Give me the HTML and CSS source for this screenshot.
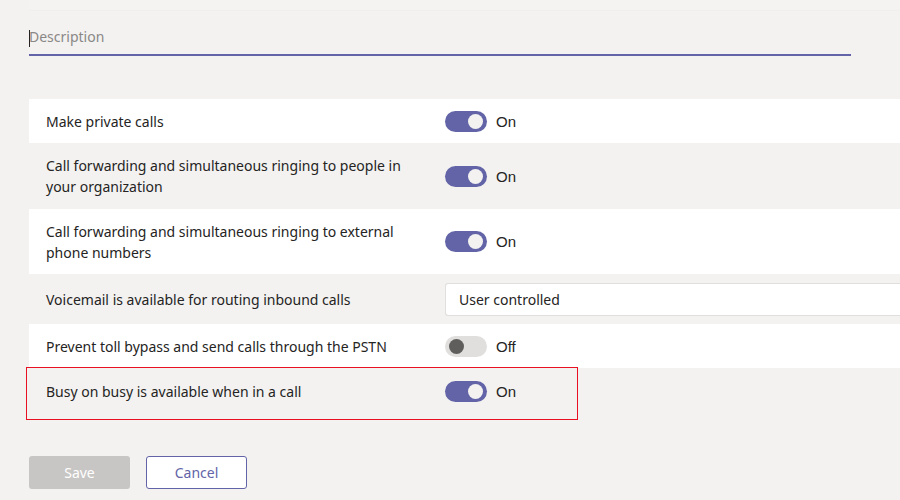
FILE: index.html
```html
<!DOCTYPE html>
<html lang="en">
<head>
    <meta charset="UTF-8">
    <meta name="viewport" content="width=device-width, initial-scale=1.0">
    <title>Calling policy</title>
    <link rel="stylesheet" href="styles.css">
</head>
<body>
    <div class="page">
        <div class="top-strip"></div>

        <div class="field">
            <span class="caret"></span>
            <input class="description" type="text" placeholder="Description">
        </div>

        <div class="settings">
            <div class="row white">
                <div class="label">Make private calls</div>
                <div class="control"><span class="toggle on"></span><span class="state">On</span></div>
            </div>
            <div class="row tall first-tall">
                <div class="label">Call forwarding and simultaneous ringing to people in your organization</div>
                <div class="control"><span class="toggle on"></span><span class="state">On</span></div>
            </div>
            <div class="row white tall">
                <div class="label">Call forwarding and simultaneous ringing to external phone numbers</div>
                <div class="control"><span class="toggle on"></span><span class="state">On</span></div>
            </div>
            <div class="row select-row">
                <div class="label">Voicemail is available for routing inbound calls</div>
                <div class="control"><div class="select">User controlled</div></div>
            </div>
            <div class="row white">
                <div class="label">Prevent toll bypass and send calls through the PSTN</div>
                <div class="control"><span class="toggle"></span><span class="state">Off</span></div>
            </div>
            <div class="row highlight">
                <div class="label">Busy on busy is available when in a call</div>
                <div class="control"><span class="toggle on"></span><span class="state">On</span></div>
                <div class="red-box"></div>
            </div>
        </div>

        <div class="buttons">
            <button class="btn save">Save</button>
            <button class="btn cancel">Cancel</button>
        </div>
    </div>
</body>
</html>
```

FILE: styles.css
```css
body{
    margin: 0;
    background-color: #f3f2f1;
    font-family: "Noto Sans", "Open Sans", sans-serif;
    color: #252423;
}
.page{
    padding-left: 29px;
}
.top-strip{
    height: 10px;
    background: #f4f3f2;
    border-bottom: 1px solid #f0efee;
}

/* description input */
.field{
    position: relative;
    width: 822px;
    margin-top: 16px;
}
.description{
    display: block;
    width: 100%;
    box-sizing: border-box;
    border: none;
    border-bottom: 2px solid #6264a7;
    background: transparent;
    font-family: inherit;
    font-size: 14px;
    padding: 0 0 8px 0;
    height: 29px;
    outline: none;
}
.description::placeholder{
    color: #8a8886;
}
.caret{
    position: absolute;
    left: 0;
    top: 3px;
    width: 1px;
    height: 17px;
    background: #252423;
}

/* settings list */
.settings{
    margin-top: 43px;
}
.row{
    position: relative;
    display: flex;
    align-items: center;
    height: 44px;
    font-size: 14px;
}
.row.white{
    background: #ffffff;
}
.row.tall{
    height: 65px;
}
.row.first-tall{
    height: 66px;
}
.row.select-row{
    height: 50px;
}
.row.highlight{
    height: 46px;
    margin-bottom: 42px;
}
.label{
    width: 365px;
    padding-left: 17px;
    padding-right: 34px;
    line-height: 21px;
}
.control{
    display: flex;
    align-items: center;
    flex: 1;
}
.toggle{
    position: relative;
    width: 42px;
    height: 21px;
    border-radius: 11px;
    background: #e1dfdd;
}
.toggle::after{
    content: '';
    position: absolute;
    top: 3px;
    left: 4px;
    width: 15px;
    height: 15px;
    border-radius: 50%;
    background: #605e5c;
}
.toggle.on{
    background: #6264a7;
}
.toggle.on::after{
    left: auto;
    right: 4px;
    background: #f3f2f1;
}
.state{
    margin-left: 9px;
    font-family: "Liberation Sans", Arial, sans-serif;
    font-size: 15px;
    color: #252423;
}
.select{
    flex: 1;
    height: 31px;
    line-height: 31px;
    background: #ffffff;
    border: 1px solid #e1dfdd;
    border-right: none;
    border-radius: 3px 0 0 3px;
    padding-left: 13px;
    font-size: 14px;
}
.red-box{
    position: absolute;
    left: -3px;
    top: -1px;
    width: 550px;
    height: 51px;
    border: 1px solid #e81123;
}

/* buttons */
.buttons{
    display: flex;
    gap: 16px;
}
.btn{
    width: 101px;
    height: 33px;
    border-radius: 3px;
    font-family: inherit;
    font-size: 14px;
}
.save{
    background: #c8c6c4;
    border: none;
    color: #ffffff;
}
.cancel{
    background: #ffffff;
    border: 1px solid #6264a7;
    color: #6264a7;
}
```
